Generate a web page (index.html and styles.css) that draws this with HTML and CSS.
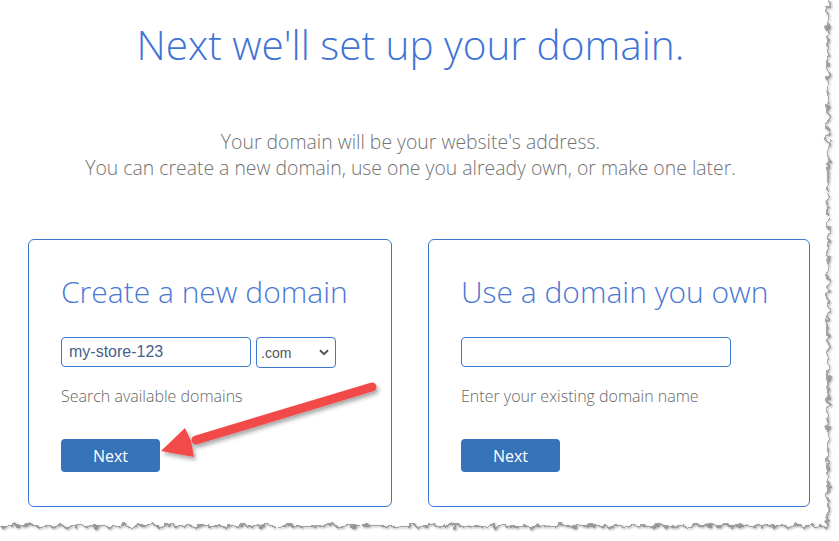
FILE: index.html
```html
<!DOCTYPE html>
<html lang="en">
<head>
    <meta charset="UTF-8">
    <title>Set up your domain</title>
    <link rel="stylesheet" href="styles.css">
</head>
<body>
    <div class="sheet">
        <h1 class="title">Next we'll set up your domain.</h1>
        <p class="lead">Your domain will be your website's address.<br>You can create a new domain, use one you already own, or make one later.</p>

        <div class="options">
            <section class="card card-new">
                <h2>Create a new domain</h2>
                <div class="field-row">
                    <input class="domain-input short" type="text" value="my-store-123">
                    <div class="tld">
                        <select><option>.com</option></select>
                        <svg class="chev" viewBox="0 0 10 7"><path d="M1 1.2 5 5.2 9 1.2" fill="none" stroke="#555" stroke-width="2"/></svg>
                    </div>
                </div>
                <p class="hint">Search available domains</p>
                <button class="next">Next</button>
            </section>

            <section class="card card-own">
                <h2>Use a domain you own</h2>
                <div class="field-row">
                    <input class="domain-input long" type="text" value="">
                </div>
                <p class="hint">Enter your existing domain name</p>
                <button class="next">Next</button>
            </section>
        </div>

        <!-- callout arrow pasted over the screenshot -->
        <svg class="arrow" width="839" height="541" viewBox="0 0 839 541">
            <defs>
                <filter id="arrow-shadow" x="-10%" y="-20%" width="130%" height="150%">
                    <feDropShadow dx="2" dy="3" stdDeviation="2" flood-color="#000" flood-opacity="0.35"/>
                </filter>
            </defs>
            <g filter="url(#arrow-shadow)" fill="#f24848">
                <line x1="372" y1="387" x2="196" y2="440" stroke="#f24848" stroke-width="9" stroke-linecap="round"/>
                <polygon points="161,451 185,428 191,441 194,457"/>
            </g>
        </svg>

        <!-- torn paper edge -->
        <svg class="torn" width="839" height="541" viewBox="0 0 839 541">
            <defs>
                <filter id="rough" filterUnits="userSpaceOnUse" x="0" y="0" width="839" height="541">
                    <feTurbulence type="fractalNoise" baseFrequency="0.14" numOctaves="2" seed="7" result="noise"/>
                    <feDisplacementMap in="SourceGraphic" in2="noise" scale="10" xChannelSelector="R" yChannelSelector="G" result="edge"/>
                    <feGaussianBlur in="edge" stdDeviation="1.3" result="blur"/>
                    <feOffset in="blur" dx="1" dy="1" result="shade"/>
                    <feMerge>
                        <feMergeNode in="shade"/>
                        <feMergeNode in="edge"/>
                    </feMerge>
                </filter>
            </defs>
            <path d="M-10 526 L828 526 L828 -10" fill="none" stroke="#8a8a8a" stroke-width="1.3" filter="url(#rough)"/>
        </svg>
    </div>
</body>
</html>
```

FILE: styles.css
```css
body {
    margin: 0;
    background: #fff;
    font-family: "Open Sans", "Liberation Sans", sans-serif;
}
.sheet {
    position: relative;
    box-sizing: border-box;
    width: 839px;
    height: 541px;
    padding-top: 16px;
    overflow: hidden;
}
.title {
    width: 821px;
    margin: 0;
    text-align: center;
    font-size: 40.5px;
    font-weight: 300;
    line-height: 57px;
    color: #3f74d6;
}
.lead {
    width: 821px;
    margin: 56px 0 0;
    text-align: center;
    font-size: 19.4px;
    font-weight: 300;
    line-height: 26px;
    color: #727272;
}
.options {
    display: flex;
    gap: 36px;
    margin-top: 58px;
    padding-left: 28px;
}
.card {
    box-sizing: border-box;
    height: 268px;
    padding: 32px 32px 34px;
    border: 1px solid #3b78d0;
    border-radius: 6px;
}
.card-new {
    width: 364px;
}
.card-own {
    width: 382px;
}
.card h2 {
    margin: 0;
    font-size: 30px;
    font-weight: 300;
    line-height: 40px;
    color: #4a78d4;
}
.field-row {
    display: flex;
    gap: 5px;
    height: 31px;
    margin-top: 25px;
}
.domain-input {
    box-sizing: border-box;
    height: 30px;
    padding: 0 7px;
    border: 1px solid #3b78d0;
    border-radius: 4px;
    font: 16px "Liberation Sans", Arial, sans-serif;
    color: #48618a;
}
.short {
    width: 190px;
}
.long {
    width: 270px;
}
.tld {
    position: relative;
    width: 80px;
    height: 31px;
}
.tld select {
    appearance: none;
    box-sizing: border-box;
    width: 100%;
    height: 100%;
    padding: 0 4px;
    border: 1px solid #3b78d0;
    border-radius: 4px;
    background: #fff;
    font: 14px "Liberation Sans", Arial, sans-serif;
    color: #555;
}
.chev {
    position: absolute;
    right: 7px;
    top: 12px;
    width: 10px;
    height: 7px;
}
.hint {
    margin: 16px 0 0;
    font-size: 16px;
    font-weight: 300;
    line-height: 24px;
    color: #666;
}
.next {
    display: block;
    width: 99px;
    height: 33px;
    margin-top: 31px;
    border: none;
    border-radius: 4px;
    background: #3673b9;
    color: #fff;
    font: 16px "Open Sans", sans-serif;
}
.arrow,
.torn {
    position: absolute;
    left: 0;
    top: 0;
    pointer-events: none;
}
```
